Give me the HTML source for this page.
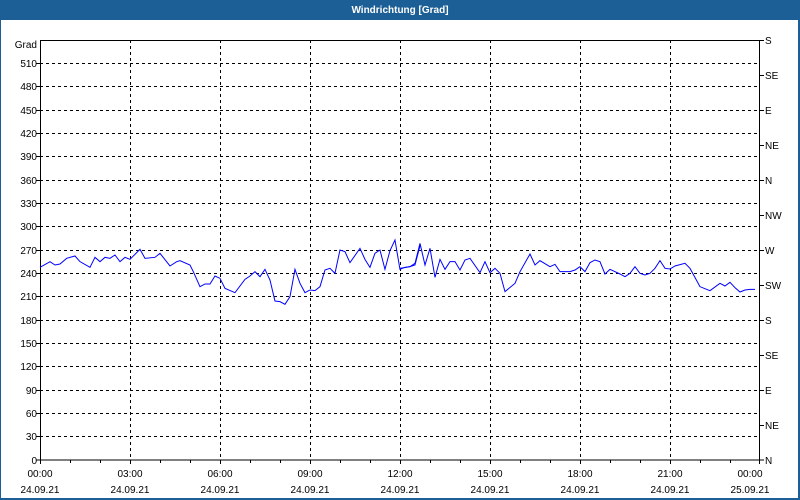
<!DOCTYPE html>
<html><head><meta charset="utf-8"><style>
html,body{margin:0;padding:0;background:#fff;}
svg{display:block;font-family:"Liberation Sans",sans-serif;}
</style></head><body>
<svg width="800" height="500" viewBox="0 0 800 500" xmlns="http://www.w3.org/2000/svg">
<rect x="0" y="0" width="800" height="500" fill="#1c5f96"/>
<rect x="1" y="20" width="797" height="478" fill="#fff"/>
<text x="400" y="13" fill="#fff" font-size="10" font-weight="bold" text-anchor="middle">Windrichtung [Grad]</text>
<g stroke="#000" stroke-width="1" stroke-dasharray="3,3" shape-rendering="crispEdges">
<path d="M40 63.5H760M40 86.5H760M40 110.5H760M40 133.5H760M40 156.5H760M40 180.5H760M40 203.5H760M40 226.5H760M40 250.5H760M40 273.5H760M40 296.5H760M40 320.5H760M40 343.5H760M40 366.5H760M40 390.5H760M40 413.5H760M40 436.5H760"/>
<path d="M130.5 40V460M220.5 40V460M310.5 40V460M400.5 40V460M490.5 40V460M580.5 40V460M670.5 40V460"/>
</g>
<g stroke="#000" stroke-width="1" fill="none" shape-rendering="crispEdges">
<rect x="40.5" y="40.5" width="719" height="419.5"/>
<path d="M40.5 460v4M70.5 460v3M100.5 460v3M130.5 460v4M160.5 460v3M190.5 460v3M220.5 460v4M250.5 460v3M280.5 460v3M310.5 460v4M340.5 460v3M370.5 460v3M400.5 460v4M430.5 460v3M460.5 460v3M490.5 460v4M520.5 460v3M550.5 460v3M580.5 460v4M610.5 460v3M640.5 460v3M670.5 460v4M700.5 460v3M730.5 460v3M759.5 460v4"/>
<path d="M36 63.5h4M36 86.5h4M36 110.5h4M36 133.5h4M36 156.5h4M36 180.5h4M36 203.5h4M36 226.5h4M36 250.5h4M36 273.5h4M36 296.5h4M36 320.5h4M36 343.5h4M36 366.5h4M36 390.5h4M36 413.5h4M36 436.5h4M36 460h4"/>
<path d="M760 40.5h4M760 75.5h4M760 110.5h4M760 145.5h4M760 180.5h4M760 215.5h4M760 250.5h4M760 285.5h4M760 320.5h4M760 355.5h4M760 390.5h4M760 425.5h4M760 460h4"/>
</g>
<g fill="#000" font-size="10" text-anchor="end">
<text x="37" y="48">Grad</text>
<text x="37" y="67">510</text><text x="37" y="90">480</text><text x="37" y="114">450</text><text x="37" y="137">420</text><text x="37" y="160">390</text><text x="37" y="184">360</text><text x="37" y="207">330</text><text x="37" y="230">300</text><text x="37" y="254">270</text><text x="37" y="277">240</text><text x="37" y="300">210</text><text x="37" y="324">180</text><text x="37" y="347">150</text><text x="37" y="370">120</text><text x="37" y="394">90</text><text x="37" y="417">60</text><text x="37" y="440">30</text><text x="37" y="464">0</text>
</g>
<g fill="#000" font-size="10">
<text x="765" y="44">S</text><text x="765" y="79">SE</text><text x="765" y="114">E</text><text x="765" y="149">NE</text><text x="765" y="184">N</text><text x="765" y="219">NW</text><text x="765" y="254">W</text><text x="765" y="289">SW</text><text x="765" y="324">S</text><text x="765" y="359">SE</text><text x="765" y="394">E</text><text x="765" y="429">NE</text><text x="765" y="464">N</text>
</g>
<g fill="#000" font-size="10" text-anchor="middle">
<text x="40" y="477">00:00</text><text x="130" y="477">03:00</text><text x="220" y="477">06:00</text><text x="310" y="477">09:00</text><text x="400" y="477">12:00</text><text x="490" y="477">15:00</text><text x="580" y="477">18:00</text><text x="670" y="477">21:00</text><text x="750" y="477">00:00</text>
<text x="40" y="493">24.09.21</text><text x="130" y="493">24.09.21</text><text x="220" y="493">24.09.21</text><text x="310" y="493">24.09.21</text><text x="400" y="493">24.09.21</text><text x="490" y="493">24.09.21</text><text x="580" y="493">24.09.21</text><text x="670" y="493">24.09.21</text><text x="750" y="493">25.09.21</text>
</g>
<g fill="none" stroke="#0000ff" stroke-width="1">
<polyline vector-effect="non-scaling-stroke" transform="translate(40,220) scale(0.3333)" points="0,142 30,125 45,135 60,132 80,115 105,108 120,125 150,142 165,112 180,125 195,112 210,115 225,105 240,125 255,112 270,118 300,88 315,115 345,112 360,100 390,138 410,125 420,122 450,135 460,155 480,200 495,192 510,192 525,168 540,175 555,205 585,218 615,178 630,168 645,155 660,170 675,148 690,180 705,243 720,245 735,253 750,230 765,148 780,190 795,218 810,210 825,212 840,200 855,150 870,145 885,160 900,90 915,95 930,128 960,85 975,118 990,142 1005,100 1020,90 1035,148 1050,92 1065,60 1080,148 1095,142 1110,140 1125,135 1140,78"/>
<polyline vector-effect="non-scaling-stroke" transform="translate(400,220) scale(0.3333)" points="0,145 30,140 45,130 60,70 75,135 90,85 105,172 120,118 135,148 150,125 165,125 180,150 195,120 210,115 240,158 255,125 270,158 285,145 300,160 315,215 345,190 360,155 390,102 405,135 420,122 450,140 465,133 480,155 510,155 525,150 540,140 555,155 570,128 585,120 600,125 615,162 630,148 660,162 675,170 690,160 705,140 720,160 735,165 750,160 765,145 780,122 795,145 810,147 825,138 855,130 870,145 900,200 930,212 960,190 975,198 990,187 1005,203 1020,216 1035,210 1050,208 1065,208"/>
</g>
</svg>
</body></html>
